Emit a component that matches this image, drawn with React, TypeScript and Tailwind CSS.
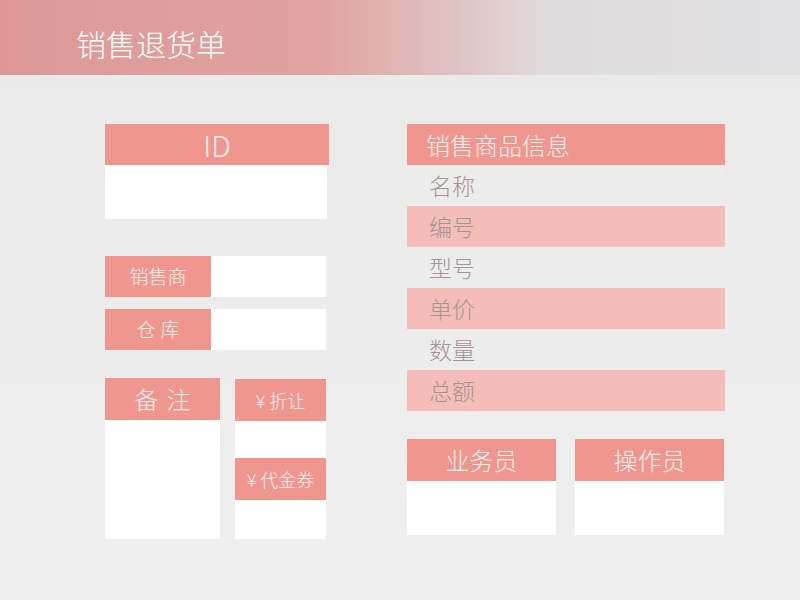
const FONT = "font-['Noto_Sans_CJK_SC','Noto_Sans',sans-serif]"

const PRODUCT_ROWS = ["名称", "编号", "型号", "单价", "数量", "总额"]

function LabelHeader({ children, className = "" }: { children: React.ReactNode; className?: string }) {
  return (
    <div className={`flex items-center justify-center bg-[#ef968f] font-light text-[#fdf1ef] ${className}`}>
      {children}
    </div>
  )
}

function FieldRow({ label, spaced }: { label: string; spaced?: boolean }) {
  return (
    <div className="flex h-[41px]">
      <LabelHeader className={`w-[106px] text-[19px] ${spaced ? "pl-[5px] tracking-[5px]" : ""}`}>{label}</LabelHeader>
      <div className="w-[115px] bg-white" />
    </div>
  )
}

export default function App() {
  return (
    <div className={`h-[600px] w-[800px] bg-gradient-to-b from-[#e9e9e9] to-[#efefef] ${FONT}`}>
      <header className="h-[75px] bg-[linear-gradient(90deg,#dd9896_0%,#e0a3a1_40%,#dfc3c3_57%,#e0dcdd_69%,#e1e1e3_100%)] pl-[76px] pt-[26px]">
        <h1 className="text-[30px] leading-[34px] font-light text-white">销售退货单</h1>
      </header>

      <main className="flex pl-[105px] pt-[49px]">
        {/* left column */}
        <div className="w-[224px]">
          <div>
            <LabelHeader className="h-[41px] w-[224px] text-[29px] font-extralight">ID</LabelHeader>
            <div className="h-[54px] w-[222px] bg-white" />
          </div>

          <div className="mt-[37px] flex flex-col gap-[12px]">
            <FieldRow label="销售商" />
            <FieldRow label="仓库" spaced />
          </div>

          <div className="mt-[28px] flex gap-[15px]">
            <div className="w-[115px]">
              <LabelHeader className="h-[42px] pl-[8px] text-[24px] tracking-[8px]">备注</LabelHeader>
              <div className="h-[119px] bg-white" />
            </div>
            <div className="mt-px w-[91px]">
              <LabelHeader className="h-[42px] text-[18px]">¥ 折让</LabelHeader>
              <div className="h-[37px] bg-white" />
              <LabelHeader className="h-[42px] text-[18px]">¥ 代金券</LabelHeader>
              <div className="h-[39px] bg-white" />
            </div>
          </div>
        </div>

        {/* right column */}
        <div className="ml-[78px] w-[318px]">
          <div className="flex h-[41px] items-center bg-[#ef968f] pl-[19px] text-[24px] font-light text-[#fdf1ef]">
            销售商品信息
          </div>
          {PRODUCT_ROWS.map((row, i) => (
            <div
              key={row}
              className={`flex h-[41px] items-center pl-[22px] text-[23px] font-light text-[#a49595] ${
                i % 2 === 1 ? "bg-[#f5bdb8]" : "bg-[#ececec]"
              }`}
            >
              {row}
            </div>
          ))}

          <div className="mt-[28px] flex gap-[19px]">
            {["业务员", "操作员"].map((name) => (
              <div key={name} className="w-[149px]">
                <LabelHeader className="h-[42px] text-[24px]">{name}</LabelHeader>
                <div className="h-[54px] bg-white" />
              </div>
            ))}
          </div>
        </div>
      </main>
    </div>
  )
}
